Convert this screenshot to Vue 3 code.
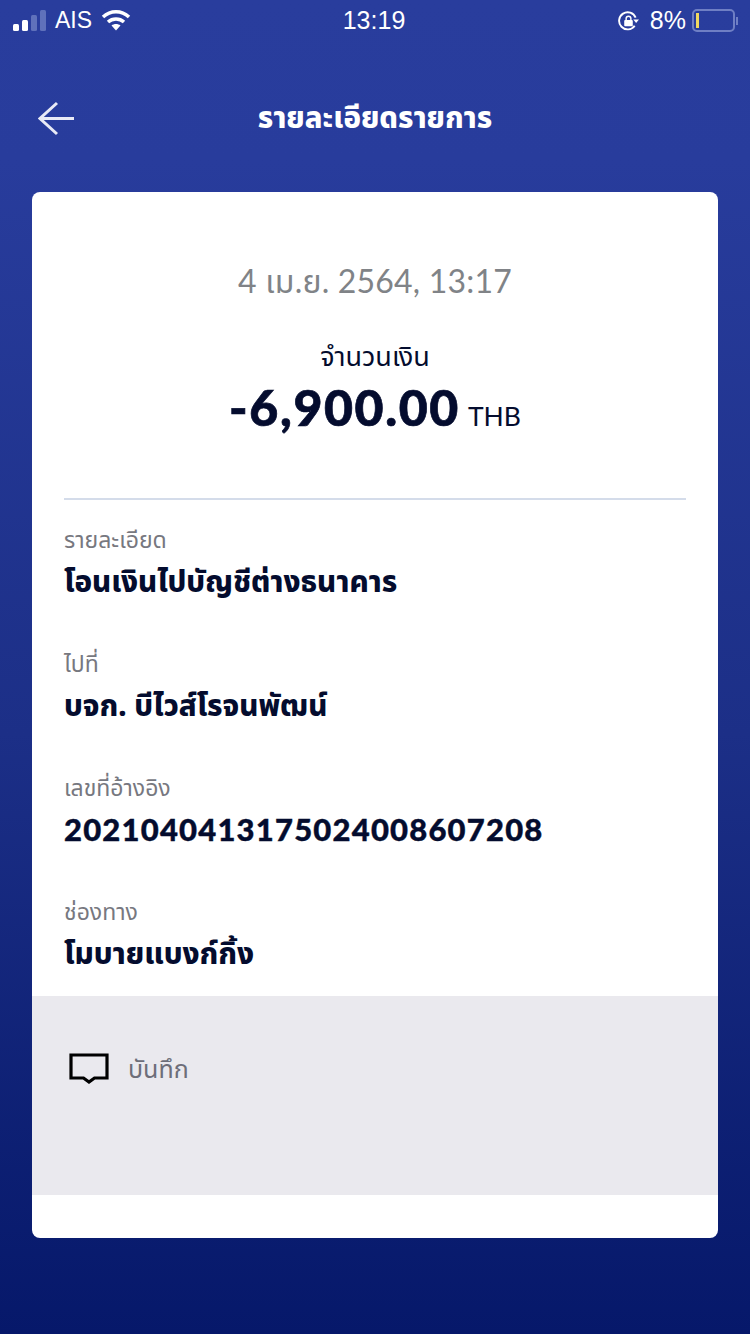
<script setup>
const rows = [
  { label: 'รายละเอียด', value: 'โอนเงินไปบัญชีต่างธนาคาร' },
  { label: 'ไปที่', value: 'บจก. บีไวส์โรจนพัฒน์' },
  { label: 'เลขที่อ้างอิง', value: '2021040413175024008607208', isNum: true },
  { label: 'ช่องทาง', value: 'โมบายแบงก์กิ้ง' },
]
</script>

<template>
  <div class="page">
    <div class="status">
      <div class="status-left">
        <svg width="34" height="22" viewBox="0 0 34 22" class="signal">
          <rect x="0" y="14" width="6" height="7" rx="1.5" fill="#fff" />
          <rect x="9" y="10" width="6" height="11" rx="1.5" fill="#fff" />
          <rect x="18" y="5" width="6" height="16" rx="1.5" fill="#5f71bb" />
          <rect x="27" y="0" width="6" height="21" rx="1.5" fill="#5f71bb" />
        </svg>
        <span class="carrier">AIS</span>
        <svg width="30" height="22" viewBox="0 0 30 22" class="wifi">
          <path d="M2 8C9.500 1 20.500 1 28 8" fill="none" stroke="#fff" stroke-width="3.500" />
          <path d="M7 13C11.500 9 18.500 9 23 13" fill="none" stroke="#fff" stroke-width="3.500" />
          <path d="M10.500 16.500C13 14.500 17 14.500 19.500 16.500L15 21.500Z" fill="#fff" />
        </svg>
      </div>
      <div class="time">13:19</div>
      <div class="status-right">
        <svg width="21" height="20" viewBox="0 0 22 21" class="lock">
          <path d="M17.500 15.500A9 9 0 1 1 18.500 7" fill="none" stroke="#fff" stroke-width="2" />
          <path d="M16 9L22 9L19 12.500Z" fill="#fff" />
          <rect x="6.500" y="9.500" width="9" height="6.500" rx="1" fill="#fff" />
          <path d="M8.500 9.500V8a2.500 2.500 0 0 1 5 0V9.500" fill="none" stroke="#fff" stroke-width="1.500" />
        </svg>
        <span class="battery-text">8%</span>
        <div class="battery"><div class="battery-level"></div></div>
        <div class="battery-cap"></div>
      </div>
    </div>

    <div class="header">
      <svg width="38" height="36" viewBox="0 0 38 36" class="back">
        <path d="M19 3L2 18.500L19 34M2 18.500H36" fill="none" stroke="#e8eaf6" stroke-width="3" />
      </svg>
      <div class="title">รายละเอียดรายการ</div>
    </div>

    <div class="card">
      <div class="summary">
        <div class="date">4 เม.ย. 2564, 13:17</div>
        <div class="amount-label">จำนวนเงิน</div>
        <div class="amount"><span class="amount-num">-6,900.00</span><span class="currency">THB</span></div>
      </div>
      <div class="details">
        <div v-for="row in rows" :key="row.label" class="row">
          <div class="row-label">{{ row.label }}</div>
          <div class="row-value" :class="{ num: row.isNum }">{{ row.value }}</div>
        </div>
      </div>
      <div class="note">
        <svg width="40" height="31" viewBox="0 0 40 31">
          <path d="M2 2H38V25H25.500L20 29L14.500 25H2Z" fill="none" stroke="#000" stroke-width="3.200" />
        </svg>
        <span class="note-text">บันทึก</span>
      </div>
    </div>
  </div>
</template>

<style>
html, body { margin: 0; padding: 0; }
</style>

<style scoped>
.page {
  width: 750px;
  height: 1334px;
  overflow: hidden;
  background: linear-gradient(#293d9d 0%, #283c9c 12%, #1c2f87 55%, #06186a 100%);
  font-family: "Noto Sans", "Lato", "Noto Sans Thai", sans-serif;
  color: #fff;
}
.status {
  height: 40px;
  display: grid;
  grid-template-columns: 1fr auto 1fr;
  align-items: center;
  padding: 1px 12px 0 13px;
  box-sizing: border-box;
  font-family: "Liberation Sans", sans-serif;
  font-size: 25px;
}
.status-left { display: flex; align-items: center; }
.carrier { margin-left: 8px; font-size: 23px; }
.wifi { margin-left: 9px; margin-top: -2px; }
.time { margin-left: -3px; }
.status-right { display: flex; align-items: center; justify-content: flex-end; }
.battery-text { margin-left: 11px; }
.battery {
  margin-left: 6px;
  width: 35px;
  height: 15px;
  border: 2px solid #6f7fc4;
  border-radius: 5px;
  padding: 2px;
  margin-right: 1px;
}
.battery-level { width: 3px; height: 100%; background: #f0d860; }
.battery-cap { width: 2px; height: 8px; background: #6f7fc4; }
.header {
  height: 152px;
  box-sizing: border-box;
  padding: 60px 0 0 38px;
  display: grid;
  grid-template-columns: 1fr auto 1fr;
  align-items: start;
}
.title { font-size: 29.3px; font-weight: 800; line-height: 36px; margin-left: -38px; margin-top: -1px; }
.card {
  margin: 0 32px;
  height: 1046px;
  background: #fff;
  border-radius: 8px;
  overflow: hidden;
  color: #040c2e;
}
.summary {
  margin: 0 32px;
  height: 308px;
  box-sizing: border-box;
  padding-top: 68px;
  border-bottom: 2px solid #d4dcea;
  text-align: center;
}
.date {
  font-family: "Lato", "Noto Sans Thai", sans-serif;
  font-size: 32px;
  line-height: 42px;
  color: #808387;
  letter-spacing: 0.2px;
}
.amount-label { margin-top: 36px; font-size: 27px; line-height: 36px; }
.amount { display: flex; justify-content: center; align-items: baseline; margin-top: 1px; }
.amount-num {
  font-family: "Lato", sans-serif;
  font-weight: 900;
  font-size: 50px;
  letter-spacing: 1.6px;
  line-height: 64px;
  -webkit-text-stroke: 0.7px #040c2e;
}
.currency { font-family: "Lato", sans-serif; font-size: 26.5px; margin-left: 8px; }
.details { padding: 18px 32px 0; }
.row { height: 124px; }
.row-label { font-size: 23px; line-height: 42px; color: #77787f; }
.row-value { font-size: 29.4px; font-weight: 800; line-height: 42px; }
.row-value.num {
  font-family: "Lato", sans-serif;
  font-weight: 900;
  font-size: 31px;
  letter-spacing: 1.2px;
  -webkit-text-stroke: 0.4px #040c2e;
}
.note {
  height: 199px;
  background: #eae9ee;
  padding: 57px 37px 0;
  box-sizing: border-box;
  display: flex;
  align-items: flex-start;
  gap: 19px;
  margin-top: -18px;
}
.note-text { font-size: 25px; color: #6d6e79; line-height: 36px; margin-top: -3px; }
</style>
